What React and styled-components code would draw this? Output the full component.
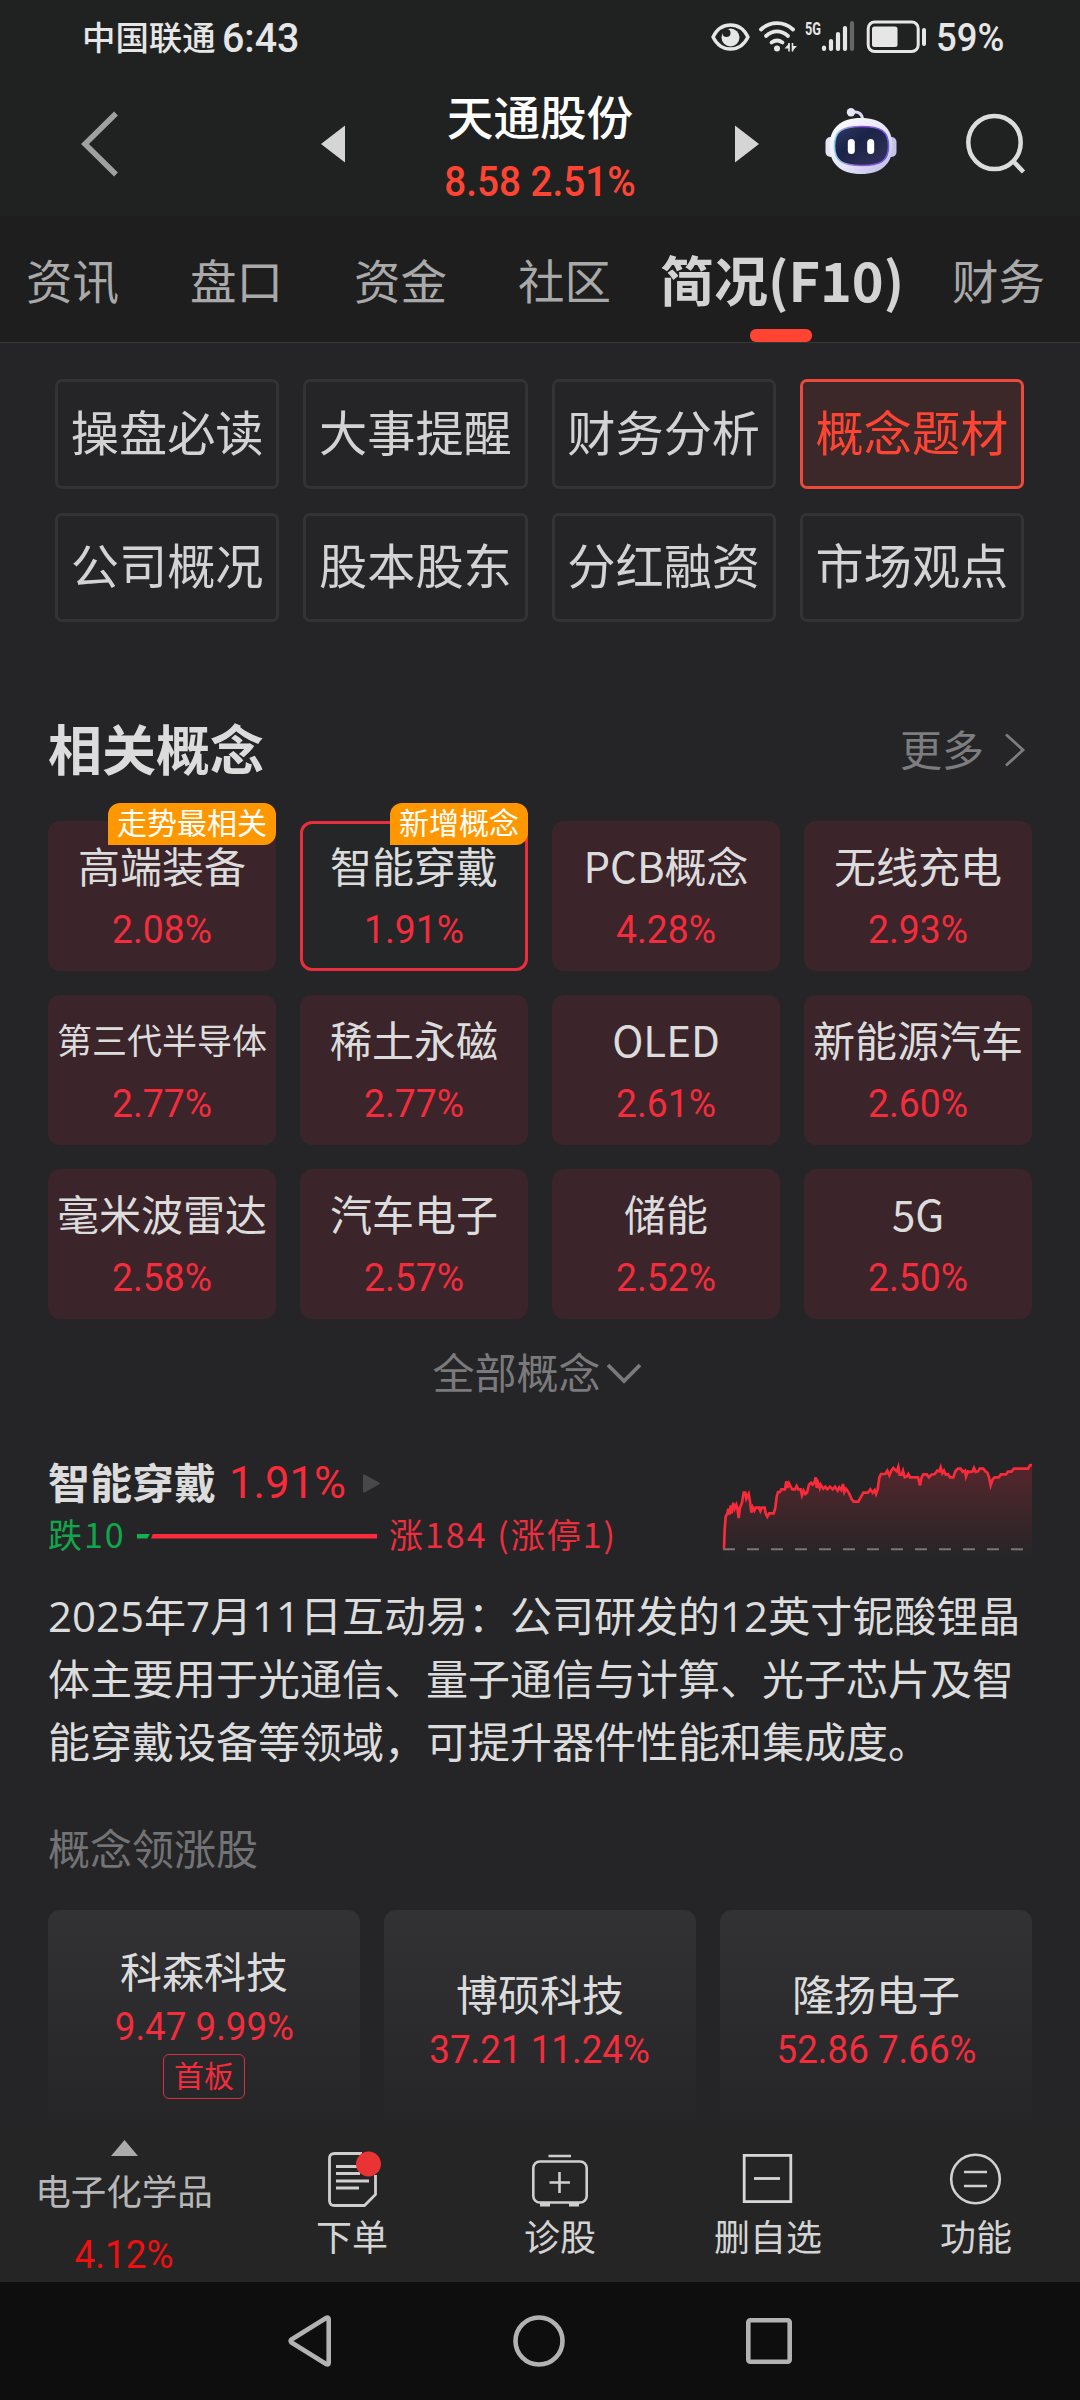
import styled, { createGlobalStyle, css } from "styled-components";

const tabs = ["资讯", "盘口", "资金", "社区", "简况(F10)", "财务"];

const sections = [
	"操盘必读",
	"大事提醒",
	"财务分析",
	"概念题材",
	"公司概况",
	"股本股东",
	"分红融资",
	"市场观点",
];

const concepts = [
	{ name: "高端装备", change: "2.08%", badge: "走势最相关" },
	{ name: "智能穿戴", change: "1.91%", badge: "新增概念", selected: true },
	{ name: "PCB概念", change: "4.28%" },
	{ name: "无线充电", change: "2.93%" },
	{ name: "第三代半导体", change: "2.77%" },
	{ name: "稀土永磁", change: "2.77%" },
	{ name: "OLED", change: "2.61%" },
	{ name: "新能源汽车", change: "2.60%" },
	{ name: "毫米波雷达", change: "2.58%" },
	{ name: "汽车电子", change: "2.57%" },
	{ name: "储能", change: "2.52%" },
	{ name: "5G", change: "2.50%" },
];

const stocks = [
	{ name: "科森科技", quote: "9.47 9.99%", tag: "首板" },
	{ name: "博硕科技", quote: "37.21 11.24%" },
	{ name: "隆扬电子", quote: "52.86 7.66%" },
];

const trend =
	"72,328 74,270 77,232 82,222 85,208 88,226 92,198 95,222 100,190 104,208 109,196 112,206 116,236 120,205 126,190 131,160 136,160 139,178 146,164 150,186 154,220 158,204 163,214 167,205 177,205 181,215 185,205 194,205 197,222 202,232 208,222 221,222 226,205 230,172 234,158 240,158 244,150 255,150 259,126 263,146 267,132 272,142 277,150 285,150 290,140 295,150 302,150 306,168 311,154 316,164 321,160 327,136 333,130 338,136 343,130 347,114 350,146 354,130 359,146 362,136 370,148 376,142 382,150 390,142 398,150 405,142 413,154 418,144 424,152 429,134 433,158 438,148 444,156 450,168 455,180 461,187 475,187 482,174 490,160 504,160 511,150 518,160 524,152 528,164 533,150 538,114 543,104 556,104 562,94 568,108 574,94 580,86 590,96 595,82 599,106 605,106 609,94 614,114 620,112 625,104 630,114 654,114 660,138 665,114 670,105 680,105 687,114 694,106 704,104 712,94 718,96 722,84 727,102 732,94 737,106 744,104 750,114 760,114 766,96 774,88 782,88 788,98 795,94 798,112 804,96 810,98 818,96 822,86 827,98 834,96 839,88 850,88 856,96 862,100 867,114 872,138 878,120 884,114 896,114 903,105 918,105 924,97 934,97 942,88 984,88 990,78 996,77";

function StatusIcons() {
	return (
		<svg width="216" height="34" viewBox="710 20 216 34" fill="none" stroke="#e6e6e6">
			<path d="M713 37C721 21 740 21 748 37C740 53 721 53 713 37Z" strokeWidth="3.4" strokeLinejoin="round" />
			<circle cx="730.5" cy="37.5" r="9" fill="#e6e6e6" stroke="none" />
			<circle cx="726.5" cy="33" r="4" fill="#202221" stroke="none" />
			<g strokeWidth="3.8" strokeLinecap="round">
				<path d="M761 29.5C770 21 784 21 793 29.5" />
				<path d="M766 36C773 30 781 30 788 36" />
				<path d="M771.5 42.5C775 40 779 40 782.5 42.5" />
			</g>
			<circle cx="777" cy="48.5" r="3" fill="#e6e6e6" stroke="none" />
			<path d="M789 43v8.500M792.500 43v8.500" strokeWidth="1.600" />
			<path d="M789.500 43l-5 5.500h5zM792 51.500l5-5.500h-5z" fill="#e6e6e6" stroke="none" />
			<g strokeWidth="4.2" strokeLinecap="round">
				<path d="M824 47.500v1.500M831 41v8M838 34v15M845 28v21" />
				<path d="M852 23v26" stroke="#666" />
			</g>
			<rect x="868.200" y="22" width="50" height="29.500" rx="6.500" strokeWidth="3" />
			<rect x="872" y="26.500" width="25.500" height="20.500" rx="2.500" fill="#e6e6e6" stroke="none" />
			<rect x="922" y="28" width="4" height="18" rx="2" fill="#e6e6e6" stroke="none" />
			<text
				x="805"
				y="34.500"
				fill="#e6e6e6"
				stroke="none"
				fontFamily="Roboto, sans-serif"
				fontWeight="700"
				fontSize="18.500"
				textLength="16"
				lengthAdjust="spacingAndGlyphs"
			>
				5G
			</text>
		</svg>
	);
}

function Robot() {
	return (
		<svg width="72" height="68" viewBox="0 0 72 68">
			<defs>
				<linearGradient id="shell" x1="0" y1="0" x2="1" y2="1">
					<stop offset="0" stopColor="#ffffff" />
					<stop offset="0.55" stopColor="#e6e5f7" />
					<stop offset="1" stopColor="#b9b5e4" />
				</linearGradient>
				<linearGradient id="rim" x1="0" y1="0" x2="1" y2="0">
					<stop offset="0" stopColor="#7fd2f4" />
					<stop offset="0.5" stopColor="#9a4ddb" />
					<stop offset="1" stopColor="#6a5be8" />
				</linearGradient>
				<linearGradient id="glass" x1="0" y1="0" x2="1" y2="1">
					<stop offset="0" stopColor="#303a62" />
					<stop offset="0.4" stopColor="#1b2346" />
					<stop offset="1" stopColor="#33345c" />
				</linearGradient>
			</defs>
			<path d="M27 4.500C34 3 37.500 6 37.500 12" fill="none" stroke="#dcdaf3" strokeWidth="3" />
			<circle cx="26" cy="4.300" r="4.200" fill="#e6e4f8" />
			<rect x="0.500" y="29" width="10" height="20" rx="5" fill="#e4e3f5" />
			<rect x="61.500" y="29" width="10" height="20" rx="5" fill="#c4c1ec" />
			<path
				d="M36 10C56 10 67.500 20 67.500 38C67.500 56 56 66 36 66C16 66 4.500 56 4.500 38C4.500 20 16 10 36 10Z"
				fill="url(#shell)"
			/>
			<path
				d="M36.500 18.500C56 18.500 63.500 23 63.500 38C63.500 53 56 57.500 36.500 57.500C17 57.500 9.500 53 9.500 38C9.500 23 17 18.500 36.500 18.500Z"
				fill="url(#glass)"
				stroke="url(#rim)"
				strokeWidth="1.600"
			/>
			<rect x="22.800" y="31" width="7" height="15" rx="3.500" fill="#fff" />
			<rect x="42.200" y="31" width="7" height="15" rx="3.500" fill="#fff" />
		</svg>
	);
}

const actions = [
	{
		label: "下单",
		icon: (
			<svg width="56" height="56" viewBox="0 0 56 56" fill="none" stroke="#cfcfcf" strokeWidth="2.8">
				<path d="M51.500 24V43.500L40.500 54.500H10.500Q5.500 54.500 5.500 49.500V7.500Q5.500 2.500 10.500 2.500H38" />
				<path d="M12 15.500H34M12 22.500H36M12 30H45M12 37H35" />
				<circle cx="44.500" cy="13" r="12.500" fill="#ea3434" stroke="none" />
			</svg>
		),
	},
	{
		label: "诊股",
		icon: (
			<svg width="56" height="56" viewBox="0 0 56 56" fill="none" stroke="#cfcfcf" strokeWidth="2.600">
				<rect x="1.300" y="10.500" width="53.400" height="41" rx="6.500" />
				<path d="M16.500 5H39M27.500 21V42M17.500 31.500H38" />
				<path d="M8 53.500H18M37 53.500H47" strokeWidth="4" />
			</svg>
		),
	},
	{
		label: "删自选",
		icon: (
			<svg width="56" height="56" viewBox="0 0 56 56" fill="none" stroke="#d6d6d6" strokeWidth="2.800">
				<rect x="4.200" y="4.400" width="46.600" height="46.200" />
				<path d="M14 27.500H40" />
			</svg>
		),
	},
	{
		label: "功能",
		icon: (
			<svg width="56" height="56" viewBox="0 0 56 56" fill="none" stroke="#d0d0d0" strokeWidth="2.600">
				<circle cx="27.500" cy="28" r="24.300" />
				<path d="M16 21H39M16 35H39" />
			</svg>
		),
	},
];

function Trend() {
	return (
		<svg width="309" height="100" viewBox="69 62 927 300">
			<defs>
				<linearGradient id="area" x1="0" y1="77" x2="0" y2="360" gradientUnits="userSpaceOnUse">
					<stop offset="0" stopColor="#ff2a3b" stopOpacity="0.22" />
					<stop offset="1" stopColor="#ff2a3b" stopOpacity="0" />
				</linearGradient>
			</defs>
			<polygon points={`69,360 ${trend} 996,360`} fill="url(#area)" />
			<path d="M69 330H996" stroke="#7b7476" strokeWidth="6" strokeDasharray="36 36" />
			<polyline points={trend} fill="none" stroke="#f92a3a" strokeWidth="8" />
		</svg>
	);
}

export default function App() {
	return (
		<Screen>
			<GlobalStyle />
			<StatusBar>
				<span className="carrier">中国联通</span>
				<span className="time">6:43</span>
				<div className="icons">
					<StatusIcons />
				</div>
				<span className="battery">59%</span>
			</StatusBar>

			<Header>
				<svg width="38" height="66" viewBox="0 0 38 66" fill="none" stroke="#a0a0a0" strokeWidth="5.500">
					<path d="M35 2.500L4 33L35 63.500" />
				</svg>
				<svg className="prev" width="24" height="38" viewBox="0 0 24 38" fill="#d5d5d5">
					<path d="M24 0.500V37.500L0 19Z" />
				</svg>
				<div className="stock">
					<h1>天通股份</h1>
					<p>8.58 2.51%</p>
				</div>
				<svg className="next" width="24" height="38" viewBox="0 0 24 38" fill="#d5d5d5">
					<path d="M0 0.500V37.500L24 19Z" />
				</svg>
				<div className="robot">
					<Robot />
				</div>
				<svg className="search" width="60" height="62" viewBox="0 0 60 62" fill="none" stroke="#dcdcdc" strokeWidth="4.500">
					<ellipse cx="28.500" cy="31.500" rx="26.200" ry="26.600" />
					<path d="M47.500 50.500L57.500 61" />
				</svg>
			</Header>

			<Tabs>
				{tabs.map((tab) => (
					<Tab key={tab} $active={tab === "简况(F10)"}>
						{tab}
					</Tab>
				))}
			</Tabs>

			<Content>
				<SectionGrid>
					{sections.map((name) => (
						<SectionButton key={name} $active={name === "概念题材"}>
							{name}
						</SectionButton>
					))}
				</SectionGrid>

				<SectionHead>
					<h2>相关概念</h2>
					<a>
						<span>更多</span>
						<svg width="22" height="36" viewBox="0 0 22 36" fill="none" stroke="#7d7d80" strokeWidth="2.800">
							<path d="M2 2.500L19 18L2 33.500" />
						</svg>
					</a>
				</SectionHead>

				<ConceptGrid>
					{concepts.map(({ name, change, badge, selected }) => (
						<ConceptCard key={name} $selected={selected}>
							{badge && <Badge>{badge}</Badge>}
							<ConceptName $small={name.length > 5}>{name}</ConceptName>
							<Change>{change}</Change>
						</ConceptCard>
					))}
				</ConceptGrid>

				<ShowAll>
					<span>全部概念</span>
					<svg width="36" height="24" viewBox="0 0 36 24" fill="none" stroke="#7a7a7c" strokeWidth="3.800">
						<path d="M2 3L18 19L34 3" />
					</svg>
				</ShowAll>

				<Summary>
					<div>
						<SummaryTitle>
							<strong>智能穿戴</strong>
							<span>1.91%</span>
							<svg width="17" height="19" viewBox="0 0 17 19" fill="#48484a">
								<path d="M0 1.500Q0 0 1.500 0.500L16 8.500Q17.500 9.500 16 10.500L1.500 18.500Q0 19 0 17.500Z" />
							</svg>
						</SummaryTitle>
						<Breadth>
							<span className="fall">跌10</span>
							<div className="fall-bar" />
							<div className="rise-bar" />
							<span className="rise">涨184 (涨停1)</span>
						</Breadth>
					</div>
					<Trend />
				</Summary>

				<Description>
					2025年7月11日互动易：公司研发的12英寸铌酸锂晶体主要用于光通信、量子通信与计算、光子芯片及智能穿戴设备等领域，可提升器件性能和集成度。
				</Description>

				<SubTitle>概念领涨股</SubTitle>

				<StockGrid>
					{stocks.map(({ name, quote, tag }) => (
						<StockCard key={name}>
							<h3>{name}</h3>
							<p>{quote}</p>
							{tag && <Tag>{tag}</Tag>}
						</StockCard>
					))}
				</StockGrid>
			</Content>

			<BottomBar>
				<Industry>
					<svg width="27" height="16" viewBox="0 0 27 16" fill="#ababab">
						<path d="M13.500 0L27 16H0Z" />
					</svg>
					<span>电子化学品</span>
					<em>4.12%</em>
				</Industry>
				{actions.map(({ label, icon }) => (
					<Action key={label}>
						{icon}
						<span>{label}</span>
					</Action>
				))}
			</BottomBar>

			<SystemNav>
				<svg width="44" height="54" viewBox="0 0 44 54" fill="none" stroke="#b2b2b2" strokeWidth="4.600">
					<path d="M38.500 3.800Q40.700 3 40.700 5.500V48.500Q40.700 51 38.500 50.200L3.500 28.500Q2 27 3.500 25.500Z" strokeLinejoin="round" />
				</svg>
				<svg width="54" height="54" viewBox="0 0 54 54" fill="none" stroke="#b2b2b2" strokeWidth="4.600">
					<circle cx="27" cy="27" r="23.500" />
				</svg>
				<svg width="46" height="54" viewBox="0 0 46 54" fill="none" stroke="#b2b2b2" strokeWidth="4.600">
					<rect x="2.300" y="6.300" width="41.400" height="41.400" rx="2" />
				</svg>
			</SystemNav>
		</Screen>
	);
}

const GlobalStyle = createGlobalStyle`
	* {
		box-sizing: border-box;
	}

	body {
		margin: 0;
		background: #252527;
	}

	h1, h2, h3, p {
		margin: 0;
	}

	svg {
		display: block;
		flex: none;
		overflow: visible;
	}
`;

const numeric = css`
	font-family: Roboto, "Noto Sans CJK SC", sans-serif;
	white-space: nowrap;
`;

const Screen = styled.div`
	display: flex;
	flex-direction: column;
	width: 1080px;
	height: 2400px;
	overflow: hidden;
	background: #252527;
	color: #dcdcdc;
	font-family: "Noto Sans CJK SC", sans-serif;
`;

const StatusBar = styled.div`
	display: flex;
	align-items: center;
	flex: none;
	height: 76px;
	padding-left: 82px;
	background: #202221;
	color: #e6e6e6;
	line-height: 76px;

	.carrier {
		width: 140px;
		font-size: 33.4px;
		font-weight: 500;
		margin-top: -5px;
	}

	.time {
		${numeric}
		width: 488px;
		font-size: 41px;
		font-weight: 500;
		transform: scaleX(0.96);
		transform-origin: left;
	}

	.icons {
		width: 226px;
		margin-top: -2px;
	}

	.battery {
		${numeric}
		font-size: 38px;
		font-weight: 500;
		transform: scaleX(0.96);
		transform-origin: left;
	}
`;

const Header = styled.header`
	display: flex;
	align-items: flex-start;
	flex: none;
	height: 140px;
	padding: 35px 0 0 81px;
	background: #202221;

	.prev {
		margin: 14px 0 0 202px;
	}

	.stock {
		width: 390px;
		margin-top: -24px;
		text-align: center;
	}

	h1 {
		color: #fff;
		font-size: 46.600px;
		font-weight: 500;
		line-height: 56px;
	}

	p {
		${numeric}
		color: #ff4433;
		font-size: 43px;
		font-weight: 500;
		line-height: 50px;
		margin-top: 13px;
		transform: scaleX(0.9);
	}

	.next {
		margin-top: 14px;
	}

	.robot {
		margin: -3px 69px 0 66px;
	}
`;

const Tabs = styled.nav`
	display: flex;
	align-items: center;
	flex: none;
	height: 127px;
	padding-left: 26px;
	gap: 71px;
	background: #1e1e1e;
	border-bottom: 1px solid #38383a;
`;

const Tab = styled.div`
	flex: none;
	color: #a9a9a9;
	font-size: 46.500px;
	line-height: 124px;

	${({ $active }) =>
		$active &&
		css`
			position: relative;
			width: 243px;
			margin: 0 -22px;
			color: #d3d3d3;
			font-size: 54px;
			font-weight: 700;
			white-space: nowrap;

			&::after {
				content: "";
				position: absolute;
				bottom: -1px;
				left: 90px;
				width: 62px;
				height: 13px;
				border-radius: 6px;
				background: #ff4433;
			}
		`}
`;

const Content = styled.main`
	flex: 1;
	min-height: 0;
	padding: 36px 48px 0;
	overflow: hidden;
`;

const SectionGrid = styled.div`
	display: grid;
	grid-template-columns: repeat(4, 1fr);
	gap: 24px;
	padding: 0 8px 0 7px;
`;

const SectionButton = styled.div`
	height: 110px;
	border: 3px solid ${({ $active }) => ($active ? "#ee4a3c" : "#333334")};
	border-radius: 7px;
	background: ${({ $active }) => ($active ? "#3c2829" : "transparent")};
	color: ${({ $active }) => ($active ? "#ff4433" : "#d3d3d3")};
	font-size: 48.200px;
	line-height: 97px;
	text-align: center;
	white-space: nowrap;

	&:nth-child(n + 5) {
		height: 109px;
		line-height: 95px;
	}
`;

const SectionHead = styled.div`
	display: flex;
	align-items: center;
	justify-content: space-between;
	height: 70px;
	margin-top: 93px;
	padding-right: 6px;

	h2 {
		margin-top: -5px;
		font-size: 54px;
		font-weight: 700;
		line-height: 70px;
	}

	a {
		display: flex;
		align-items: center;
		gap: 20px;
		color: #7d7d80;
		font-size: 42px;
	}

	span {
		margin-top: -6px;
	}
`;

const ConceptGrid = styled.div`
	display: grid;
	grid-template-columns: repeat(4, 228px);
	grid-auto-rows: 150px;
	gap: 24px;
	margin-top: 36px;
`;

const ConceptCard = styled.div`
	position: relative;
	padding-top: 15px;
	border-radius: 12px;
	background: ${({ $selected }) => ($selected ? "#242627" : "#3b242a")};
	box-shadow: ${({ $selected }) => ($selected ? "inset 0 0 0 3px #ec2d3e" : "none")};
	text-align: center;
	white-space: nowrap;
`;

const Badge = styled.div`
	position: absolute;
	top: -18px;
	right: 0;
	height: 42px;
	padding: 0 9px;
	border-radius: 12px 12px 12px 0;
	background: #ff9800;
	color: #fff;
	font-size: 30px;
	line-height: 36px;
`;

const ConceptName = styled.div`
	font-size: ${({ $small }) => ($small ? "35px" : "42px")};
	line-height: 58px;
`;

const Change = styled.div`
	${numeric}
	margin-top: 11px;
	color: #f42c3c;
	font-size: 38px;
	line-height: 50px;
	transform: scaleX(0.98);
`;

const ShowAll = styled.div`
	display: flex;
	align-items: center;
	justify-content: center;
	gap: 5px;
	height: 60px;
	margin-top: 25px;
	padding-right: 6px;
	color: #7a7a7c;
	font-size: 42px;

	span {
		margin-top: -7px;
	}
`;

const Summary = styled.div`
	display: flex;
	justify-content: space-between;
	height: 102px;
	margin-top: 56px;
`;

const SummaryTitle = styled.div`
	display: flex;
	align-items: center;
	height: 46px;

	strong {
		margin-top: -5px;
		font-size: 42px;
		font-weight: 700;
		line-height: 46px;
	}

	span {
		${numeric}
		width: 134px;
		margin-left: 13px;
		color: #f92a3a;
		font-size: 44.500px;
		line-height: 46px;
		transform: scaleX(0.98);
		transform-origin: left;
	}
`;

const Breadth = styled.div`
	display: flex;
	align-items: center;
	height: 60px;
	font-size: 34px;
	letter-spacing: 2px;
	white-space: nowrap;

	span {
		margin-top: -5px;
	}

	.fall {
		width: 89px;
		color: #12a64c;
	}

	.rise {
		margin-left: 12px;
		color: #ee2d3e;
	}

	.fall-bar {
		width: 13px;
		height: 5px;
		background: #12b04e;
		clip-path: polygon(0 0, 100% 0, 80% 100%, 0 100%);
	}

	.rise-bar {
		width: 226px;
		height: 5px;
		margin-left: 1px;
		background: #ff2a3b;
		clip-path: polygon(2px 0, 100% 0, 100% 100%, 0 100%);
	}
`;

const Description = styled.p`
	margin-top: 22px;
	font-family: "Open Sans", "Noto Sans CJK SC", sans-serif;
	font-size: 42px;
	line-height: 63px;
	word-break: break-all;
`;

const SubTitle = styled.div`
	margin-top: 44px;
	color: #737375;
	font-size: 42px;
	line-height: 60px;
`;

const StockGrid = styled.div`
	display: grid;
	grid-template-columns: repeat(3, 312px);
	gap: 24px;
	margin-top: 33px;
`;

const StockCard = styled.div`
	display: flex;
	flex-direction: column;
	align-items: center;
	justify-content: center;
	height: 222px;
	border-radius: 12px;
	background: linear-gradient(#323234, #252527);

	h3 {
		margin-top: -3px;
		font-size: 42px;
		font-weight: 400;
		line-height: 58px;
	}

	p {
		${numeric}
		margin-top: 3px;
		color: #f42c3c;
		font-size: 39.500px;
		line-height: 50px;
		transform: scaleX(0.93);
	}
`;

const Tag = styled.div`
	height: 45px;
	margin-top: 2px;
	padding: 0 10px;
	border: 1px solid #d83040;
	border-radius: 6px;
	color: #f42c3c;
	font-size: 30px;
	line-height: 38px;
`;

const BottomBar = styled.footer`
	display: flex;
	flex: none;
	height: 152px;
	background: #252525;
`;

const Industry = styled.div`
	display: flex;
	flex-direction: column;
	align-items: center;
	width: 248px;
	padding-top: 10px;

	span {
		color: #b7b7b7;
		font-size: 35.500px;
		line-height: 50px;
		margin-top: 9px;
	}

	em {
		${numeric}
		color: #f01010;
		font-size: 38px;
		font-style: normal;
		line-height: 50px;
		margin-top: 15px;
		transform: scaleX(0.97);
	}
`;

const Action = styled.div`
	display: flex;
	flex-direction: column;
	align-items: center;
	width: 208px;
	padding-top: 21px;
	color: #d4d4d4;
	font-size: 36px;
	line-height: 50px;

	span {
		margin-top: 3px;
	}
`;

const SystemNav = styled.div`
	display: flex;
	align-items: center;
	justify-content: center;
	flex: none;
	gap: 180px;
	height: 118px;
	background: #0e0e0e;
`;
